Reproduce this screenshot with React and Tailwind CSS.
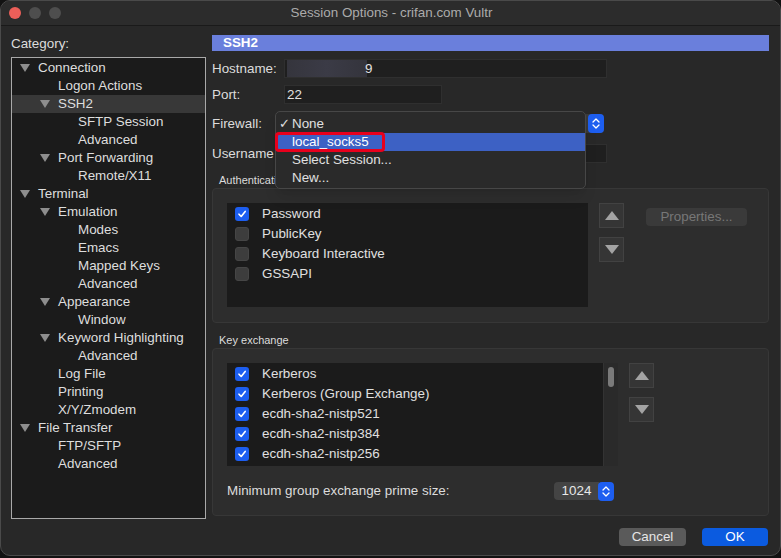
import React from 'react';

const tree = [
  { label: 'Connection', level: 0, open: true },
  { label: 'Logon Actions', level: 1 },
  { label: 'SSH2', level: 1, open: true, selected: true },
  { label: 'SFTP Session', level: 2 },
  { label: 'Advanced', level: 2 },
  { label: 'Port Forwarding', level: 1, open: true },
  { label: 'Remote/X11', level: 2 },
  { label: 'Terminal', level: 0, open: true },
  { label: 'Emulation', level: 1, open: true },
  { label: 'Modes', level: 2 },
  { label: 'Emacs', level: 2 },
  { label: 'Mapped Keys', level: 2 },
  { label: 'Advanced', level: 2 },
  { label: 'Appearance', level: 1, open: true },
  { label: 'Window', level: 2 },
  { label: 'Keyword Highlighting', level: 1, open: true },
  { label: 'Advanced', level: 2 },
  { label: 'Log File', level: 1 },
  { label: 'Printing', level: 1 },
  { label: 'X/Y/Zmodem', level: 1 },
  { label: 'File Transfer', level: 0, open: true },
  { label: 'FTP/SFTP', level: 1 },
  { label: 'Advanced', level: 1 },
];

const indent = ['pl-[8px]', 'pl-[28px]', 'pl-[48px]'];

const authMethods = [
  { label: 'Password', checked: true },
  { label: 'PublicKey', checked: false },
  { label: 'Keyboard Interactive', checked: false },
  { label: 'GSSAPI', checked: false },
];

const kexMethods = [
  'Kerberos',
  'Kerberos (Group Exchange)',
  'ecdh-sha2-nistp521',
  'ecdh-sha2-nistp384',
  'ecdh-sha2-nistp256',
];

const Triangle = () => (
  <svg width="10" height="8" viewBox="0 0 10 8">
    <path d="M0 0 L10 0 L5 8 Z" fill="#8e8e8e" />
  </svg>
);

const Checkbox = ({ checked }) =>
  checked ? (
    <div className="w-[14px] h-[14px] rounded-[3px] bg-[#1d5ef0] flex items-center justify-center">
      <svg width="10" height="10" viewBox="0 0 10 10">
        <path d="M2 5.2 L4.2 7.5 L8.2 2.4" stroke="#fff" strokeWidth="1.6" fill="none" strokeLinecap="round" strokeLinejoin="round" />
      </svg>
    </div>
  ) : (
    <div className="w-[14px] h-[14px] rounded-[3px] bg-[#3d3d3d] border border-[#464646]" />
  );

const Stepper = () => (
  <div className="w-[16px] h-[19px] rounded-[4px] bg-[#1d5ef0] flex items-center justify-center">
    <svg width="8" height="13" viewBox="0 0 8 13">
      <path d="M1 5 L4 2 L7 5 M1 8 L4 11 L7 8" stroke="#fff" strokeWidth="1.3" fill="none" strokeLinecap="round" strokeLinejoin="round" />
    </svg>
  </div>
);

const ArrowButton = ({ up }) => (
  <div className="w-[25px] h-[25px] bg-[#353535] border border-[#424242] flex items-center justify-center">
    <svg width="14" height="9" viewBox="0 0 14 9">
      <path d={up ? 'M0 9 L14 9 L7 0 Z' : 'M0 0 L14 0 L7 9 Z'} fill="#a3a3a3" />
    </svg>
  </div>
);

const Field = ({ label, width, children, mt }) => (
  <div className={`flex items-center h-[19px] ${mt}`}>
    <div className="w-[72px] text-[13.4px] leading-[16px] text-[#dcdcdc]">{label}</div>
    <div className={`${width} h-[19px] bg-[#1f1f1f] border border-[#2f2f2f] flex items-center pl-[2px] text-[13.4px] leading-[16px] text-[#e2e2e2]`}>
      {children}
    </div>
  </div>
);

const App = () => {
  return (
    <div
      className="w-[781px] h-[558px] bg-[#121212] overflow-hidden"
      style={{ fontFamily: '"Liberation Sans", Arial, sans-serif' }}
    >
      <div className="w-[781px] h-[556px] bg-[#282828] rounded-[10px] border border-[#4a4a4a] overflow-hidden flex flex-col">
        {/* title bar */}
        <div className="h-[25px] bg-[#2c2c2c] border-b border-[#1a1a1a] flex items-center relative shrink-0">
          <div className="flex gap-[8px] pl-[8px]">
            <div className="w-[12px] h-[12px] rounded-full bg-[#ec5f59]" />
            <div className="w-[12px] h-[12px] rounded-full bg-[#4e4e4e]" />
            <div className="w-[12px] h-[12px] rounded-full bg-[#4e4e4e]" />
          </div>
          <div className="flex-1 text-center text-[13.4px] leading-[16px] text-[#ababab] -ml-[58px]">
            Session Options - crifan.com Vultr
          </div>
        </div>

        {/* body */}
        <div className="flex pt-[9px] pl-[10px] gap-[6px]">
          {/* left column */}
          <div className="w-[195px] flex flex-col">
            <div className="h-[22px] text-[13.4px] text-[#dcdcdc] leading-[16px] pt-[1px]">Category:</div>
            <div className="h-[462px] bg-[#1b1b1b] border border-[#a9a9a9] pt-[1px]">
              {tree.map((item, i) => (
                <div
                  key={i}
                  className={`h-[18px] flex items-center ${indent[item.level]} ${item.selected ? 'bg-[#383838]' : ''}`}
                >
                  <div className="w-[10px] flex items-center">{item.open ? <Triangle /> : null}</div>
                  <span className="ml-[8px] text-[13.4px] leading-[16px] text-[#dedede] whitespace-nowrap">{item.label}</span>
                </div>
              ))}
            </div>
          </div>

          {/* right column */}
          <div className="w-[557px] flex flex-col relative">
            <div className="h-[16px] bg-[#6a7fdc] flex items-center pl-[11px] text-[13.4px] leading-[16px] font-bold text-white">SSH2</div>

            <Field label="Hostname:" width="w-[323px]" mt="mt-[8px]">
              <div className="w-[80px] h-[17px] bg-gradient-to-r from-[#35353d] via-[#3b3b46] to-[#34343c]" />
              <span className="-ml-[2px]">9</span>
            </Field>
            <Field label="Port:" width="w-[158px]" mt="mt-[7px]">
              22
            </Field>

            <div className="flex items-center h-[19px] mt-[10px]">
              <div className="w-[72px] text-[13.4px] leading-[16px] text-[#dcdcdc]">Firewall:</div>
              <div className="w-[320px] h-[19px] bg-[#3a3a3a] rounded-[4px] flex items-center justify-end">
                <Stepper />
              </div>
            </div>

            <Field label="Username" width="w-[323px]" mt="mt-[11px]" />

            <div className="mt-[10px] h-[14px] pl-[7px] text-[11px] leading-[14px] text-[#dcdcdc]">Authentication</div>
            <div className="mt-[1px] h-[135px] bg-[#2d2d2d] border border-[#373737] rounded-[4px] pl-[14px] pt-[14px] flex items-start">
              <div className="w-[361px] h-[104px] bg-[#1b1b1b] pt-[1px]">
                {authMethods.map((m) => (
                  <div key={m.label} className="h-[20px] flex items-center pl-[8px]">
                    <Checkbox checked={m.checked} />
                    <span className="ml-[13px] text-[13.4px] leading-[16px] text-[#e0e0e0]">{m.label}</span>
                  </div>
                ))}
              </div>
              <div className="ml-[11px] flex flex-col gap-[9px]">
                <ArrowButton up />
                <ArrowButton />
              </div>
              <div className="ml-[22px] mt-[5px] w-[101px] h-[18px] rounded-[4px] bg-[#3a3a3a] text-[13.4px] leading-[16px] text-[#777777] flex items-center justify-center">
                Properties...
              </div>
            </div>

            <div className="mt-[10px] h-[14px] pl-[7px] text-[11px] leading-[14px] text-[#dcdcdc]">Key exchange</div>
            <div className="mt-[1px] h-[168px] bg-[#2d2d2d] border border-[#373737] rounded-[4px] pl-[14px] pt-[14px] flex flex-col">
              <div className="flex items-start">
                <div className="w-[391px] h-[103px] bg-[#1b1b1b] flex">
                  <div className="flex-1 pt-[1px]">
                    {kexMethods.map((k) => (
                      <div key={k} className="h-[20px] flex items-center pl-[8px]">
                        <Checkbox checked />
                        <span className="ml-[13px] text-[13.4px] leading-[16px] text-[#e0e0e0]">{k}</span>
                      </div>
                    ))}
                  </div>
                  <div className="w-[15px] bg-[#2a2a2a] border-l border-[#333] flex justify-center pt-[4px]">
                    <div className="w-[6px] h-[20px] rounded-full bg-[#7a7a7a]" />
                  </div>
                </div>
                <div className="ml-[11px] flex flex-col gap-[9px]">
                  <ArrowButton up />
                  <ArrowButton />
                </div>
              </div>
              <div className="mt-[16px] flex items-center h-[18px]">
                <div className="w-[327px] text-[13.4px] leading-[16px] text-[#dcdcdc]">Minimum group exchange prime size:</div>
                <div className="flex items-center">
                  <div className="w-[45px] h-[18px] bg-[#444444] rounded-l-[4px] flex items-center justify-center text-[13.4px] leading-[16px] text-[#e8e8e8]">
                    1024
                  </div>
                  <div className="-ml-[1px]">
                    <Stepper />
                  </div>
                </div>
              </div>
            </div>

            <div className="mt-[12px] flex justify-end gap-[16px] pr-[1px]">
              <div className="w-[67px] h-[18px] rounded-[4px] bg-[#5a5a5a] text-[13.4px] leading-[16px] text-[#e6e6e6] flex items-center justify-center">
                Cancel
              </div>
              <div className="w-[66px] h-[18px] rounded-[4px] bg-[#0b5be0] text-[13.4px] leading-[16px] text-white flex items-center justify-center">
                OK
              </div>
            </div>

            {/* firewall dropdown menu */}
            <div className="absolute left-[63px] top-[76px] w-[311px] h-[78px] bg-[#2a2a2a] border border-[#474747] rounded-[5px] shadow-lg pt-[3px] text-[13.4px] leading-[16px] text-[#e0e0e0]">
              <div className="h-[18px] flex items-center relative">
                <span className="absolute left-[3px]">✓</span>
                <span className="pl-[16px]">None</span>
              </div>
              <div className="h-[18px] flex items-center bg-[#3d61c4] text-white relative">
                <span className="pl-[16px]">local_socks5</span>
                <div className="absolute -left-[1px] -top-[1px] w-[110px] h-[20px] border-[3px] border-[#e8001c] rounded-[4px]" />
              </div>
              <div className="h-[18px] flex items-center">
                <span className="pl-[16px]">Select Session...</span>
              </div>
              <div className="h-[18px] flex items-center">
                <span className="pl-[16px]">New...</span>
              </div>
            </div>
          </div>
        </div>
      </div>
    </div>
  );
};

export default App;
